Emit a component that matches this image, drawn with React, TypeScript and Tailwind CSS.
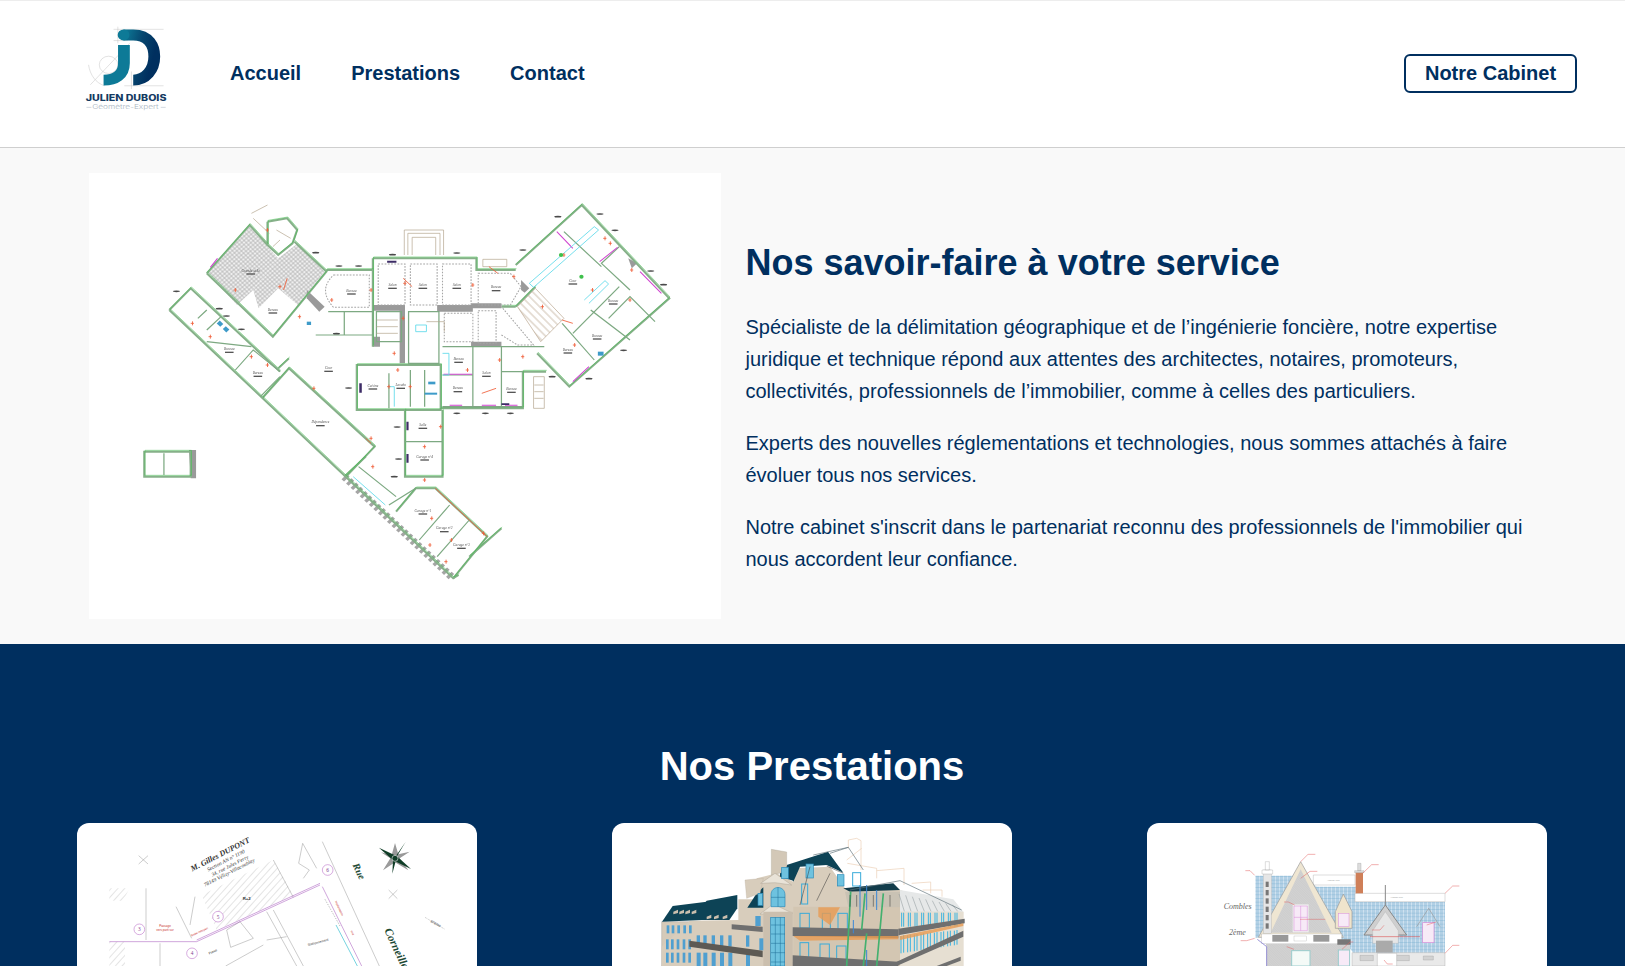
const navLinks = ["Accueil", "Prestations", "Contact"];

function Logo() {
  return (
    <svg viewBox="70 75 238 262" preserveAspectRatio="none" className="mb-[9px] h-[87px] w-[85px] shrink-0">
      <defs>
        <linearGradient id="logoD" x1="0" y1="0" x2="1" y2="0.4">
          <stop offset="0" stopColor="#0d7a97" />
          <stop offset="0.55" stopColor="#06466f" />
          <stop offset="1" stopColor="#002f5f" />
        </linearGradient>
      </defs>
      <g fill="none" stroke="#b9b9b9" strokeWidth="1.2">
        <path d="M150 88H290M162 80V130M150 122H190M180 258H290M200 215V268M195 130L85 255" />
        <circle cx="136" cy="195" r="26" />
        <path d="M80 195C84 225 100 250 125 258" />
      </g>
      <path d="M178 105H205C250 105 264 140 264 170C264 210 240 241 205 241" fill="none" stroke="url(#logoD)" strokeWidth="33" />
      <circle cx="178" cy="105" r="16.5" fill="#0d7a97" />
      <path d="M179 135V190C179 225 155 241 122 241" fill="none" stroke="#0d7a97" strokeWidth="33" />
      <text x="72" y="304" textLength="226" lengthAdjust="spacingAndGlyphs" fontFamily="Inter, sans-serif" fontWeight="800" fontSize="25" fill="#143a62">JULIEN DUBOIS</text>
      <text x="90" y="329" textLength="186" lengthAdjust="spacingAndGlyphs" fontFamily="Inter, sans-serif" fontWeight="300" fontSize="19" fill="#a9b5c2">Géomètre-Expert</text>
      <path d="M74 323H88M282 323H296" stroke="#a9b5c2" strokeWidth="1.5" />
    </svg>
  );
}

// walls of the plan, in the drawing's own units
const thickWalls = [
  "M110 360L170 295L420 545M110 360L905 1165L920 1155",
  "M370 625L445 535L685 770L605 860",
  "M215 250L335 105L385 165M215 250L400 440L550 245L460 155",
  "M385 95L440 85L468 120L455 160L415 195L385 165V95",
  "M550 240H680M680 205H970V240H1080M680 205V470",
  "M1080 225L1265 45L1510 325L1230 590L1140 490",
  "M1080 350L1135 290M1040 350H1080",
  "M635 525H870V660H635Z",
  "M770 660V860H875V660",
  "M870 655H1100V545H1165",
  "M745 965L800 895H855L1000 1040L905 1165",
  "M950 1100L1040 1015",
  "M40 785H170V860H40Z",
  "M415 535L445 505",
  "M600 860L660 800",
];

const thinWalls = [
  "M215 455L340 470M295 540L345 480L420 545M365 620L420 560",
  "M190 385L215 360M215 420L255 380",
  "M555 365H680V435H520M600 365V435",
  "M780 365H865V520H780ZM690 365H760V455H690Z",
  "M875 470H1160M960 470V650M875 555H960M1040 470V650M1040 545H1100",
  "M725 550V655M785 540V650M825 540V650",
  "M770 755H875",
  "M810 1050L895 945M860 1100L950 990",
  "M1210 400L1300 510M1240 430L1370 290M1340 385L1400 320L1470 395M1290 360L1400 450",
  "M1215 125L1320 230M1370 170L1320 220L1400 300",
  "M95 790V855",
  "M725 945L800 895M640 830L745 920",
];

const dottedRooms = [
  "M695 222H770V345H695ZM785 222H860V345H785ZM875 222H955V345H875Z",
  "M880 370H960V455H880ZM975 362H1025V460H975Z",
  "M570 255H670V352H570Q525 300 570 255ZM975 250H1065L1095 290L1065 345H975Z",
  "M1040 435L1085 465L1130 465L1040 350",
];

const greyBlocks = [
  "M495 300L545 350L530 365L495 325Z",
  "M680 345H770V362H680ZM860 345H960V365H860ZM955 455H1040V468H955Z",
  "M680 440H700V470H680ZM955 340H1040V355H955ZM755 360H770V520H755Z",
  "M1095 270L1118 295L1105 308L1095 300Z",
  "M875 648H1100V656H875Z",
  "M1395 205L1420 220L1405 235Z",
  "M165 780H185V865H170Z",
];

const redMarks = [
  [290, 300], [415, 290], [560, 330], [670, 300], [765, 280], [955, 285], [1070, 260], [1240, 465], [1325, 145], [1400, 240],
  [1395, 330], [1290, 300], [760, 385], [735, 490], [745, 540], [940, 540], [1030, 510], [1095, 500], [720, 590], [780, 590],
  [865, 710], [820, 770], [820, 870], [840, 985], [895, 1050], [985, 1030], [835, 1065], [170, 400], [220, 440], [335, 500],
  [380, 525], [510, 595], [670, 745], [675, 830], [470, 380], [380, 120], [1340, 160], [1210, 195], [1150, 350], [880, 1115],
];

const dims = [
  [130, 304], [250, 356], [270, 378], [312, 418], [520, 188], [585, 228], [640, 228], [735, 194], [915, 189], [1198, 80],
  [1316, 72], [1358, 121], [1100, 180], [1458, 243], [1494, 284], [1382, 481], [1285, 566], [1182, 560], [612, 594], [915, 670],
  [995, 670], [1065, 670], [748, 711], [752, 807], [740, 860], [578, 431],
];

const labels = [
  [620, 305, "Bureau"], [735, 288, "Salon"], [820, 288, "Salon"], [915, 288, "Salon"], [1025, 295, "Bureau"], [1240, 275, "Cour"], [556, 537, "Cour"],
  [533, 700, "Dépendance"], [680, 590, "Cuisine"], [758, 588, "Lavabo"], [920, 510, "Bureau"], [918, 598, "Bureau"], [998, 552, "Salon"],
  [1068, 600, "Bureau"], [820, 708, "Salle"], [825, 803, "Garage n°4"], [820, 965, "Garage n°1"], [880, 1018, "Garage n°2"], [928, 1068, "Garage n°3"],
  [1226, 482, "Bureau"], [1308, 440, "Bureau"], [1353, 335, "Bureau"], [400, 362, "Bureau"], [278, 480, "Bureau"], [358, 552, "Bureau"], [338, 245, "Grande salle"],
];

function FloorPlan() {
  return (
    <svg viewBox="-114.8 -51 1769.6 1338" preserveAspectRatio="none" className="block h-[446px] w-[632px] bg-white blur-[0.3px]">
      <defs>
        <pattern id="tiles" width="9" height="9" patternUnits="userSpaceOnUse" patternTransform="rotate(47)">
          <rect width="9" height="9" fill="#efefef" />
          <path d="M0 4.5H9M4.5 0V9" stroke="#a3a3a3" strokeWidth="1.5" />
        </pattern>
        <pattern id="steps" width="16" height="16" patternUnits="userSpaceOnUse" patternTransform="rotate(47)">
          <path d="M0 8H16" stroke="#b9a58e" strokeWidth="2" />
        </pattern>
      </defs>
      <path d="M218 250L335 110L415 205L345 300L300 345Z" fill="url(#tiles)" />
      <path d="M345 300L415 205L470 160L545 245L470 345L415 295L360 355Z" fill="url(#tiles)" />
      <path d="M1085 350L1135 295L1215 385L1150 455Z" fill="url(#steps)" stroke="#b9a58e" strokeWidth="2" />
      <g fill="#9a9a9a">
        {greyBlocks.map((d) => <path key={d} d={d} />)}
      </g>
      <path d="M600 860L905 1165" fill="none" stroke="#a5a5a5" strokeWidth="22" strokeDasharray="10 8" />
      <g fill="none" stroke="#86b089" strokeWidth="6">
        {thickWalls.map((d) => <path key={d} d={d} />)}
      </g>
      <g fill="none" stroke="#45bd52" strokeWidth="1.6">
        {thickWalls.map((d) => <path key={d} d={d} transform="translate(2 -4)" />)}
      </g>
      <g fill="none" stroke="#7da982" strokeWidth="3.5">
        {thinWalls.map((d) => <path key={d} d={d} />)}
      </g>
      <g fill="none" stroke="#a5a5a5" strokeWidth="3" strokeDasharray="5 4">
        {dottedRooms.map((d) => <path key={d} d={d} />)}
      </g>
      <g fill="none" stroke="#b3a48e" strokeWidth="2">
        <path d="M768 195V120H878V195M778 195V130H868V195M790 195V142H856V195" />
        <path d="M340 70L385 45M345 85L390 130M410 120L450 145M420 150L400 170" />
        <path d="M1130 560H1160V655H1130Z M1132 585H1158M1132 605H1158M1132 625H1158" />
        <path d="M988 208H1055V230H988Z" />
        <path d="M690 390H750M690 410H750M690 430H750M830 395H880V425" />
      </g>
      <g fill="none" stroke="#d046d0" strokeWidth="3">
        <path d="M1195 125L1240 175M1315 215L1365 172M1428 245L1488 310M878 553H958M225 232L245 205M895 646H930M985 646H1025M1050 646H1085M1240 575L1285 530" />
      </g>
      <g fill="none" stroke="#5fdaea" strokeWidth="2.5">
        <path d="M1118 280L1300 110L1312 120L1130 292ZM1272 330L1330 272L1340 282L1285 340M875 490H893V555H875M625 860L715 945M722 590H740V650M800 405H830V425H800Z" />
      </g>
      <g stroke="#f0603a" strokeWidth="2.5" fill="none">
        {redMarks.map(([x, y]) => <path key={`${x}-${y}`} d={`M${x} ${y}h9m-4 -6v12`} />)}
        <path d="M765 265L790 290M1005 230L1030 250M1025 595L985 610M440 265L430 300M855 895L1000 1040M660 745L675 760M1240 400L1210 390" />
      </g>
      <g fill="#4a4a4a">
        {dims.map(([x, y]) => <ellipse key={`${x}-${y}`} cx={x} cy={y} rx="10" ry="2.5" />)}
      </g>
      <g fill="#3d2c66">
        <path d="M642 580h7v28h-7ZM774 695h6v26h-6ZM774 792h6v26h-6ZM720 212h26v6h-26ZM1040 640h22v5h-22Z" />
      </g>
      <g fontFamily="Liberation Serif, serif" fontSize="10" textAnchor="middle" fill="#555" fontStyle="italic">
        {labels.map(([x, y, t]) => (
          <g key={`${x}-${y}`}>
            <text x={x} y={y}>{t}</text>
            <rect x={Number(x) - 12} y={Number(y) + 5} width="24" height="4" fill="#555" />
          </g>
        ))}
      </g>
      <circle cx="1207" cy="195" r="6" fill="#3fc04c" />
      <circle cx="1264" cy="260" r="6" fill="#3fc04c" />
      <g fill="#3e9bc9">
        <rect x="245" y="395" width="14" height="12" transform="rotate(45 252 401)" />
        <rect x="262" y="412" width="14" height="12" transform="rotate(45 269 418)" />
        <rect x="835" y="575" width="20" height="8" />
        <rect x="825" y="608" width="35" height="6" />
        <rect x="1310" y="485" width="16" height="12" />
        <rect x="495" y="395" width="12" height="10" />
      </g>
    </svg>
  );
}

function CadastreDrawing() {
  return (
    <svg viewBox="51 39 1200 429" className="block h-[143px] w-full">
      <defs>
        <pattern id="cadHatch" width="15" height="15" patternUnits="userSpaceOnUse" patternTransform="rotate(42)">
          <path d="M0 0V15" stroke="#999" strokeWidth="1.6" />
        </pattern>
      </defs>
      <path d="M148 235H208L190 272H148Z" fill="url(#cadHatch)" />
      <path d="M148 395H195V468H148Z" fill="url(#cadHatch)" />
      <path d="M425 255L640 150L700 255L470 360Z" fill="url(#cadHatch)" />
      <g fill="none" stroke="#999" strokeWidth="1.5">
        <path d="M236 137L264 162M264 137L236 162M986 240L1012 266M1012 240L986 266" />
        <path d="M787 95L958 468M258 235V390M300 400V468M348 290L395 385M405 260L390 345M640 150L700 262" />
        <path d="M728 100L716 160L748 180L730 205M728 100L770 175" />
        <path d="M620 305L710 468M640 300L730 468M620 390L680 380M500 360L540 335L580 385L512 412ZM497 468L610 405" />
        <path d="M1095 322L1155 358" strokeDasharray="3 2" />
      </g>
      <path d="M148 395H410L780 225M410 390L780 220" fill="none" stroke="#a04fb8" strokeWidth="1.5" />
      <path d="M787 230L905 468" fill="none" stroke="#a04fb8" strokeWidth="1.5" />
      <path d="M828 345L892 468" fill="none" stroke="#76d3e0" strokeWidth="3" />
      <path d="M795 268L840 348" fill="none" stroke="#999" strokeWidth="2" strokeDasharray="4 4" />
      <g fill="#fff" stroke="#b05ac0" strokeWidth="1.5">
        <circle cx="238" cy="358" r="16" />
        <circle cx="396" cy="430" r="16" />
        <circle cx="474" cy="320" r="16" />
        <circle cx="803" cy="180" r="16" />
      </g>
      <g fontFamily="Liberation Serif, serif" fontSize="16" textAnchor="middle" fill="#7d3a90">
        <text x="238" y="364">3</text>
        <text x="396" y="436">4</text>
        <text x="474" y="326">5</text>
        <text x="803" y="186">6</text>
      </g>
      <g fontFamily="Liberation Serif, serif" fontStyle="italic" fill="#333" textAnchor="middle">
        <text x="484" y="140" fontSize="24" fontWeight="700" transform="rotate(-27 484 140)">M. Gilles DUPONT</text>
        <text x="500" y="156" fontSize="16" transform="rotate(-27 500 156)">Section AN n° 1190</text>
        <text x="512" y="172" fontSize="16" transform="rotate(-27 512 172)">34, rue Jules Ferry</text>
        <text x="510" y="192" fontSize="16" transform="rotate(-27 510 192)">78149 Vélizy-Villacoublay</text>
      </g>
      <g fontFamily="Liberation Serif, serif" fontStyle="italic" fontWeight="700" fill="#1e4a35" textAnchor="middle">
        <text x="888" y="188" fontSize="30" transform="rotate(65 888 188)">Rue</text>
        <text x="1000" y="420" fontSize="34" transform="rotate(65 1000 420)">Corneille</text>
      </g>
      <g fontFamily="Liberation Sans, sans-serif" fill="#c9302c" fontSize="9" textAnchor="middle">
        <text x="315" y="352">Passage</text>
        <text x="315" y="362">vers parti sur</text>
        <text x="420" y="368" transform="rotate(-25 420 368)">limite mitoyen</text>
        <text x="835" y="296" transform="rotate(65 835 296)">Implantation</text>
        <text x="875" y="370" transform="rotate(65 875 370)">mur</text>
      </g>
      <g fontFamily="Liberation Sans, sans-serif" fill="#333" fontSize="10" textAnchor="middle">
        <text x="560" y="270" fontWeight="700" fontSize="13">R+2</text>
        <text x="775" y="400" transform="rotate(-15 775 400)">Stationnement</text>
        <text x="460" y="428" transform="rotate(-25 460 428)">Passe</text>
        <text x="1125" y="344" transform="rotate(30 1125 344)">878700</text>
      </g>
      <g transform="translate(1005 145)">
        <path d="M0 -46L10 -12L44 -20L14 0L40 36L0 12L-36 36L-14 0L-42 -18L-10 -10Z" fill="#9a9a9a" />
        <path d="M-48 -32L6 -6L48 32L-6 6Z" fill="#0f3d26" />
        <path d="M32 -50L6 -6L-8 46L-6 6Z" fill="#0f3d26" />
        <circle cx="0" cy="0" r="9" fill="none" stroke="#ddd" strokeWidth="2" />
      </g>
    </svg>
  );
}

const leftWindows = [200, 215, 232, 250, 267];
const midWindows = [290, 310, 335, 360, 385, 438];
const dormers = [220, 238, 256, 275, 320, 342, 368];
const roofWindows = [905, 925, 945, 965, 985, 1005, 1025, 1045, 1065];

function BuildingDrawing() {
  return (
    <svg viewBox="36 39 1200 429" className="block h-[143px] w-full">
      <path d="M185 335H270V468H185Z" fill="#d5cab9" stroke="#888" />
      <path d="M270 332L415 330V268H470V205L530 190L580 215V175L690 170L735 235L900 240L1090 305V468H185V410Z" fill="#d8cdbc" />
      <path d="M580 290H900V468H580Z" fill="#d3c6b2" />
      <path d="M900 305H1090V468H900Z" fill="#e6dfd2" />
      <path d="M186 335L218 288L320 275L305 330Z" fill="#0d4356" />
      <path d="M272 330L320 272L412 255V295L388 330Z" fill="#0d4356" />
      <path d="M442 293L470 250L490 232V293Z" fill="#0d4356" />
      <path d="M560 165L684 125L730 188L680 165L600 170L580 215Z" fill="#0d4356" />
      <path d="M540 170L580 165V212L540 200Z" fill="#0d4356" />
      <path d="M730 235L880 220L900 240L750 245Z" fill="#123c4b" />
      <path d="M735 245H900V292H745Z" fill="#c9c2b4" />
      <path d="M900 240L1060 268L1090 305H900Z" fill="#e6e8e8" />
      <path d="M514 118L560 126V185L514 195Z" fill="#d3c8b7" stroke="#a8a092" />
      <path d="M435 210L490 205L480 250L440 265Z" fill="#d8cdbc" stroke="#b8ad9d" />
      <path d="M482 220L525 190L575 225L525 218Z" fill="#e9e3d8" stroke="#988e80" />
      <path d="M480 312L520 282L578 310Z" fill="#e9e3d8" stroke="#988e80" />
      <path d="M490 305H578V468H490Z" fill="#cbbfae" />
      <g fill="#6ec2df" stroke="#2a89b8" strokeWidth="2">
        <path d="M513 290V255C513 225 555 225 555 255V290Z" />
        <rect x="512" y="322" width="42" height="146" />
        <rect x="545" y="172" width="20" height="34" />
        <rect x="618" y="162" width="22" height="42" />
        <rect x="712" y="194" width="20" height="34" />
        <rect x="474" y="250" width="14" height="36" />
      </g>
      <path d="M513 345H555M513 372H555M513 400H555M513 428H555M513 456H555M526 322V468M541 322V468M513 262H555M534 232V290" stroke="#1f6e96" strokeWidth="1.5" />
      <g fill="#4f9fd0">
        {leftWindows.map((x) => <rect key={x} x={x} y="346" width="8" height="24" />)}
        {leftWindows.map((x) => <rect key={x} x={x - 2} y="388" width="8" height="30" />)}
        {leftWindows.map((x) => <rect key={x} x={x - 2} y="428" width="8" height="30" />)}
        {midWindows.map((x) => <rect key={x} x={x} y="376" width="10" height="34" />)}
        {midWindows.map((x) => <rect key={x} x={x} y="428" width="12" height="40" />)}
        <rect x="466" y="318" width="16" height="30" />
        <rect x="478" y="385" width="12" height="36" />
      </g>
      <g fill="#cbbfae">
        {dormers.map((x, i) => <path key={x} d={`M${x} ${i < 4 ? 305 : 320}l14 -6v10l-14 4Z`} />)}
      </g>
      <g fill="none" stroke="#39abd9" strokeWidth="3">
        <rect x="600" y="310" width="28" height="44" />
        <rect x="667" y="310" width="24" height="48" />
        <rect x="714" y="310" width="28" height="48" />
        <rect x="600" y="398" width="26" height="44" />
        <rect x="660" y="402" width="28" height="46" />
        <rect x="710" y="408" width="28" height="50" />
        <rect x="605" y="222" width="18" height="60" />
        <rect x="758" y="188" width="24" height="40" />
      </g>
      <g stroke="#3bb3e0" strokeWidth="3" fill="none">
        {roofWindows.map((x, i) => <path key={x} d={`M${x} 308V350M${x + 6} 308V350M${x - 2} ${378 - i * 2}V${430 - i * 3}M${x + 6} ${376 - i * 2}V${428 - i * 3}`} />)}
      </g>
      <g stroke="#8b9498" strokeWidth="1.5" fill="none">
        {roofWindows.map((x, i) => <path key={x} d={`M${x - 8} ${252 + i * 4}L${x + 8} ${304}`} />)}
      </g>
      <g fill="#6f6f6f">
        <path d="M395 343L488 350V366L395 358Z" />
        <path d="M268 392L488 422V442L268 410Z" fill="#5d5a54" />
        <path d="M578 352L895 358V385L578 378Z" />
        <path d="M578 436L895 455V468H578Z" />
        <path d="M895 356L1094 326V340L895 376Z" />
        <path d="M890 455L1090 362V380L890 468Z" />
        <path d="M1010 468L1082 440V452L1040 468Z" />
      </g>
      <g fill="#e99b52" opacity="0.8">
        <path d="M655 292H720L690 345L655 320Z" />
        <path d="M580 378H895V388L600 392Z" />
        <path d="M900 378L1090 340V348L900 390Z" />
      </g>
      <g stroke="#43b06f" strokeWidth="5" fill="none">
        <path d="M752 245L740 468M795 250L785 360M850 250L830 468M800 370L790 468" />
      </g>
      <g stroke="#3a86d6" strokeWidth="3" fill="none">
        <path d="M780 225V320M800 225V300M830 240V300M760 330V370M800 420V468" />
      </g>
      <g fill="none" stroke="#eccfb5" strokeWidth="2">
        <path d="M745 90L770 85L783 92V180M745 90V115M740 150L785 115M742 160L830 175V205M830 182L912 175V225M935 220L992 216V250M968 240H1026V260" />
      </g>
      <path d="M640 135L745 112L790 180M745 112L690 130M750 240L900 212L1085 300" fill="none" stroke="#60727a" strokeWidth="2" />
      <path d="M600 285L630 170M650 272L690 190M680 168L730 190M750 255V290M770 255V290M820 255V290M870 255V290" fill="none" stroke="#333" strokeWidth="1.5" />
    </svg>
  );
}

const chimneyBands = [215, 240, 265, 290, 315, 340];

function FacadeDrawing() {
  return (
    <svg viewBox="21 39 1200 429" className="block h-[143px] w-full">
      <defs>
        <pattern id="slate" width="12" height="11" patternUnits="userSpaceOnUse">
          <rect width="12" height="11" fill="#cfe2f0" />
          <path d="M0 0H12M0 0V11M6 0V11" stroke="#4d94c0" strokeWidth="1.3" />
        </pattern>
        <pattern id="stone" width="5" height="5" patternUnits="userSpaceOnUse" patternTransform="rotate(45)">
          <rect width="5" height="5" fill="#d2d2d2" />
          <path d="M0 0H5" stroke="#bcbcbc" />
        </pattern>
      </defs>
      <path d="M346 197H460L482 197L530 230H650V275H915V428H640L600 380H360L346 385Z" fill="url(#slate)" />
      <path d="M520 195H645V225H520ZM645 250H915V275H645Z" fill="#fff" stroke="#bbb" strokeWidth="1.5" />
      <g fontFamily="Liberation Sans, sans-serif" fontSize="7" fill="#999" textAnchor="middle">
        <text x="580" y="212">Ardoise zinc</text>
        <text x="770" y="265">Ardoise zinc</text>
      </g>
      <path d="M482 155L610 382H355Z" fill="#efe6d2" stroke="#999" strokeWidth="2" />
      <path d="M482 178L575 368H392Z" fill="url(#stone)" />
      <rect x="460" y="285" width="44" height="80" fill="#fff" stroke="#eee" strokeWidth="4" />
      <path d="M462 288H502V362H462ZM482 288V362M462 322H502" fill="#f7eaf7" stroke="#d88ad8" strokeWidth="1.5" />
      <path d="M378 468V402H630V468Z" fill="url(#stone)" />
      <rect x="365" y="372" width="240" height="28" fill="#fff" stroke="#aaa" />
      <rect x="397" y="375" width="48" height="20" fill="#999" />
      <rect x="520" y="375" width="48" height="20" fill="#999" />
      <rect x="462" y="378" width="38" height="15" fill="#fff" stroke="#aaa" />
      <rect x="370" y="180" width="24" height="190" fill="#e6e6e6" stroke="#aaa" />
      <path d="M366 180H398V192H366ZM376 155H388V180H376Z" fill="#fff" stroke="#999" />
      <g fill="#777">
        {chimneyBands.map((y) => <rect key={y} x="377" y={y} width="9" height="16" />)}
      </g>
      <rect x="647" y="184" width="22" height="66" fill="#cf7f58" />
      <path d="M644 182H672V188H644ZM653 160H663V182H653Z" fill="#ddd" stroke="#999" />
      <path d="M610 252L636 305V355H586V305Z" fill="#efe4cc" stroke="#999" strokeWidth="2" />
      <rect x="595" y="310" width="32" height="40" fill="#f7eaf7" stroke="#d88ad8" strokeWidth="1.5" />
      <path d="M736 285L800 375H672Z" fill="#cfcfcf" stroke="#888" strokeWidth="3" />
      <path d="M736 305L775 362V400H698V362Z" fill="#e6e6e6" stroke="#aaa" />
      <path d="M736 225V285" stroke="#888" strokeWidth="3" />
      <rect x="708" y="392" width="50" height="36" fill="#aaa" />
      <path d="M830 350L866 295L900 350" fill="none" stroke="#999" strokeWidth="2" />
      <rect x="848" y="338" width="34" height="60" fill="#f7eaf7" stroke="#d88ad8" strokeWidth="2" />
      <path d="M690 380H840" stroke="#d33" strokeWidth="1.5" />
      <path d="M480 328H556" stroke="#d33" strokeWidth="1" />
      <path d="M352 388L380 410V468" fill="none" stroke="#9a94d8" strokeWidth="3" />
      <rect x="455" y="422" width="55" height="46" fill="#f4faf7" stroke="#9cc" strokeWidth="3" />
      <rect x="595" y="420" width="34" height="48" fill="#f7eaf7" stroke="#9cc" strokeWidth="3" />
      <path d="M592 388H632V404H592Z" fill="#777" />
      <path d="M636 428H915V468H636Z" fill="#e9e9e9" stroke="#999" />
      <path d="M660 436H700V452H660ZM768 436H808V452H768ZM850 438H880V450H850Z" fill="#d2d2d2" stroke="#999" />
      <path d="M712 430H770V468H712Z" fill="#fff" stroke="#999" />
      <g fill="none" stroke="#e26060" strokeWidth="1.5">
        <path d="M482 155L504 133H526M482 205L510 184H532M344 196L330 182H316M668 190L695 164H716M915 250L938 228H958M915 430L938 406H958M344 385L320 392H302M464 285L445 276H432M606 418L630 396H640M732 346L720 360H696M860 345L888 336M462 418L440 410M732 450L742 462H758" />
      </g>
      <g fontFamily="Liberation Serif, serif" fontStyle="italic" fill="#666" fontSize="24" textAnchor="middle">
        <text x="293" y="298">Combles</text>
        <text x="292" y="375">2ème</text>
      </g>
    </svg>
  );
}

const prestations = [
  { title: "Bornage", drawing: <CadastreDrawing /> },
  { title: "Modélisation", drawing: <BuildingDrawing /> },
  { title: "Façades", drawing: <FacadeDrawing /> },
];

export default function App() {
  return (
    <div className="h-[966px] overflow-hidden bg-white font-['Liberation_Sans',Arial,sans-serif] text-[#002f5f]">
      <header className="flex h-[148px] items-center border-y border-t-[#ededed] border-b-[#cfcfcf] bg-white pb-[2px] pl-[85px] pr-[48px]">
        <Logo />
        <nav className="ml-[60px] flex gap-[50px]">
          {navLinks.map((link) => (
            <a key={link} href="#" className="text-[20px] font-bold">
              {link}
            </a>
          ))}
        </nav>
        <a
          href="#"
          className="ml-auto flex h-[39px] w-[173px] items-center justify-center rounded-md border-2 border-[#002f5f] text-[20px] font-bold"
        >
          Notre Cabinet
        </a>
      </header>

      <section className="flex items-center gap-[24.5px] bg-[#f9f9f9] py-[25px] pl-[89px] pr-[75px]">
        <FloorPlan />
        <div className="flex-1 pt-[23px]">
          <h2 className="mb-[26px] text-[36px] font-bold leading-[44px]">Nos savoir-faire à votre service</h2>
          <div className="space-y-[20px] text-[20px] leading-[32px]">
            <p>
              Spécialiste de la délimitation géographique et de l’ingénierie foncière, notre expertise juridique et
              technique répond aux attentes des architectes, notaires, promoteurs, collectivités, professionnels de
              l’immobilier, comme à celles des particuliers.
            </p>
            <p>
              Experts des nouvelles réglementations et technologies, nous sommes attachés à faire évoluer tous nos
              services.
            </p>
            <p>
              Notre cabinet s'inscrit dans le partenariat reconnu des professionnels de l'immobilier qui nous accordent
              leur confiance.
            </p>
          </div>
        </div>
      </section>

      <section className="bg-[#002f5f] pl-[77px] pr-[78px] pt-[95px] text-white">
        <h2 className="mb-[30px] text-center text-[40px] font-bold leading-[54px]">Nos Prestations</h2>
        <div className="grid grid-cols-3 gap-[135px]">
          {prestations.map((item) => (
            <article key={item.title} className="h-[300px] overflow-hidden rounded-xl bg-white">
              {item.drawing}
            </article>
          ))}
        </div>
      </section>
    </div>
  );
}
